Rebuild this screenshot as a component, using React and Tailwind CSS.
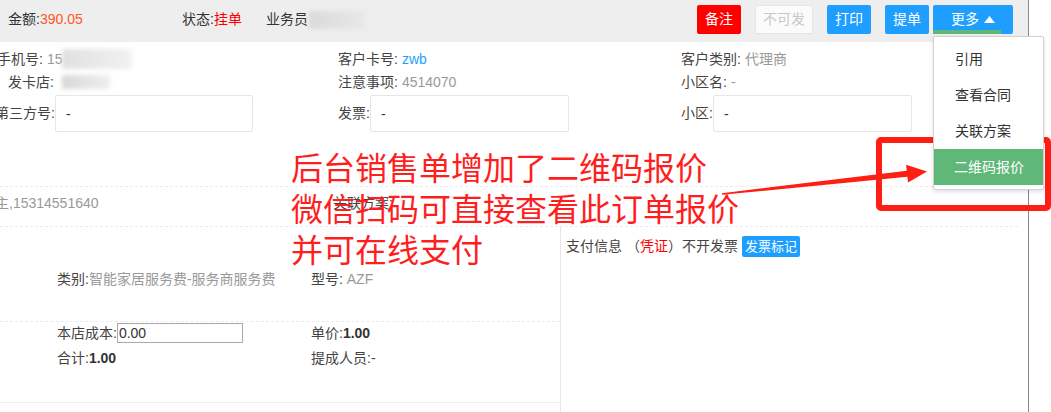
import React from "react";

const Blur = ({ className }) => (
  <span className={"inline-block blur-[2px] " + className} />
);

const TopBar = () => (
  <div className="flex h-[42px] bg-[#eeeeee] pt-[5px] pl-[8px] pr-[15px]">
    <div className="w-[174px] leading-[29px]">
      金额:<span className="text-[#ff5722]">390.05</span>
    </div>
    <div className="leading-[29px]">
      状态:<span className="text-[#ff0000]">挂单</span>
    </div>
    <div className="ml-[24px] flex h-[29px] items-center">
      业务员
      <Blur className="ml-[1px] h-[18px] w-[56px] bg-gradient-to-r from-[#dadada] to-[#e8e8e8]" />
    </div>
    <div className="ml-auto flex h-[29px] text-white">
      <button className="w-[44px] rounded-[2px] bg-[#ff0000]">备注</button>
      <button className="ml-[14px] w-[58px] rounded-[2px] border border-[#e6e6e6] bg-[#fbfbfb] text-[#c9c9c9]">
        不可发
      </button>
      <button className="ml-[14px] w-[44px] rounded-[2px] bg-[#1e9fff]">打印</button>
      <button className="ml-[14px] w-[44px] rounded-[2px] bg-[#1e9fff]">提单</button>
      <button className="ml-[4px] flex w-[80px] items-center justify-center gap-[5px] rounded-[2px] bg-[#1e9fff]">
        更多
        <svg width="11" height="7" viewBox="0 0 11 7">
          <path d="M0 7 L5.5 0 L11 7 Z" fill="#fff" />
        </svg>
      </button>
    </div>
  </div>
);

const Box = ({ className = "" }) => (
  <input
    readOnly
    value="-"
    className={
      "h-[37px] w-[198px] rounded-[2px] border border-[#e6e6e6] bg-white pl-[10px] text-[14px] text-[#333] outline-none " +
      className
    }
  />
);

const CustomerInfo = () => (
  <div className="mr-[10px] border-b border-dashed border-[#ececec] pt-[7px] pb-[54px]">
    <div className="ml-[-5px] grid grid-cols-[343px_343px_343px] gap-y-[3px] text-[#444]">
      <div className="flex h-[20px] items-center pl-[2px]">
        手机号: <span className="ml-[4px] text-[#999]">15</span>
        <Blur className="h-[20px] w-[70px] bg-gradient-to-r from-[#e0e0e0] to-[#f2f2f2]" />
      </div>
      <div className="flex h-[20px] items-center">
        客户卡号: <span className="ml-[4px] text-[#1e9fff]">zwb</span>
      </div>
      <div className="flex h-[20px] items-center">
        客户类别: <span className="ml-[4px] text-[#999]">代理商</span>
      </div>

      <div className="flex h-[20px] items-center">
        <span className="w-[59px] text-right">发卡店:</span>
        <Blur className="ml-[8px] h-[14px] w-[48px] bg-gradient-to-r from-[#d8d8d8] to-[#efefef]" />
      </div>
      <div className="flex h-[20px] items-center">
        注意事项: <span className="ml-[4px] text-[#999]">4514070</span>
      </div>
      <div className="flex h-[20px] items-center">
        小区名: <span className="ml-[4px] text-[#999]">-</span>
      </div>

      <div className="flex h-[37px] items-center">
        <span className="w-[60px] text-right">第三方号:</span>
        <Box />
      </div>
      <div className="flex h-[37px] items-center">
        <span>发票:</span>
        <Box className="w-[199px]" />
      </div>
      <div className="flex h-[37px] items-center">
        <span>小区:</span>
        <Box className="w-[199px]" />
      </div>
    </div>
  </div>
);

const OwnerRow = () => (
  <div className="mr-[10px] border-b border-dashed border-[#ececec] pt-[6px] pb-[13px]">
    <div className="ml-[-5px] grid h-[20px] grid-cols-[338px_1fr] items-center">
      <span className="text-[#999]">主,15314551640</span>
      <span className="text-[#444]">关联方案:</span>
    </div>
  </div>
);

const Product = () => (
  <div className="flex flex-1">
    <div className="w-[560px]">
      <div className="border-b border-dashed border-[#ececec] pt-[42px] pb-[32px] pl-[57px]">
        <div className="grid h-[20px] grid-cols-[254px_1fr] items-center text-[#444]">
          <div>
            类别:<span className="text-[#999]">智能家居服务费-服务商服务费</span>
          </div>
          <div>
            型号: <span className="text-[#999]">AZF</span>
          </div>
        </div>
      </div>
      <div className="border-b border-[#eeeeee] pb-[34px] pl-[57px] text-[#444]">
        <div className="grid h-[22px] grid-cols-[254px_1fr] items-center">
          <div className="flex items-center">
            本店成本:
            <input
              readOnly
              value="0.00"
              className="h-[20px] w-[126px] border border-[#a9a9a9] px-[1px] text-[14px] text-[#333] outline-none"
            />
          </div>
          <div>
            单价:<b className="text-[#333]">1.00</b>
          </div>
        </div>
        <div className="mt-[4px] grid h-[20px] grid-cols-[254px_1fr] items-center">
          <div>
            合计:<b className="text-[#333]">1.00</b>
          </div>
          <div>提成人员:-</div>
        </div>
      </div>
    </div>
    <div className="flex-1 border-l border-[#e6e6e6] pl-[5px]">
      <div className="mt-[9px] flex h-[21px] items-center text-[#444]">
        支付信息 （<span className="text-[#ff0000]">凭证</span>）不开发票
        <span className="ml-[4px] rounded-[2px] bg-[#1e9fff] px-[3px] text-[13px] leading-[21px] text-white">
          发票标记
        </span>
      </div>
    </div>
  </div>
);

const MoreMenu = () => (
  <div className="absolute left-[933px] top-[36px] w-[111px] rounded-[2px] border border-[#d2d2d2] bg-white py-[4px] text-[#333] shadow-[0_2px_4px_rgba(0,0,0,0.12)]">
    {["引用", "查看合同", "关联方案"].map((item) => (
      <div key={item} className="h-[36px] pl-[21px] leading-[36px]">
        {item}
      </div>
    ))}
    <div className="h-[36px] bg-[#5fb878] pl-[20px] leading-[36px] text-white">二维码报价</div>
  </div>
);

const App = () => {
  return (
    <div className="relative h-[412px] w-[1051px] overflow-hidden bg-white font-['Liberation_Sans','Noto_Sans_CJK_SC',sans-serif] text-[14px] text-[#333]">
      <div className="flex h-full w-[1029px] flex-col border-r border-[#8a8a8a]">
        <TopBar />
        <CustomerInfo />
        <OwnerRow />
        <Product />
      </div>

      {/* annotation */}
      <div className="absolute left-[291px] top-[146px] whitespace-nowrap font-['Noto_Sans_CJK_SC',sans-serif] text-[32px] leading-[41px] text-[#ff1e1e]">
        <div>后台销售单增加了二维码报价</div>
        <div>微信扫码可直接查看此订单报价</div>
        <div>并可在线支付</div>
      </div>
      <div className="absolute left-[876px] top-[137px] h-[74px] w-[175px] rounded-[5px] border-[6px] border-[#ff1e14]" />
      <svg className="pointer-events-none absolute left-0 top-0" width="1051" height="412" viewBox="0 0 1051 412">
        <polygon
          points="721.9,193.2 906.8,170.7 906.1,164.8 927,171.5 908.1,182.6 907.4,176.7 722.1,194.8"
          fill="#ff1e14"
        />
      </svg>

      <div className="absolute left-[933px] top-[30px] h-[4px] w-[68px] bg-[#5fb878]" />
      <MoreMenu />
    </div>
  );
};

export default App;
